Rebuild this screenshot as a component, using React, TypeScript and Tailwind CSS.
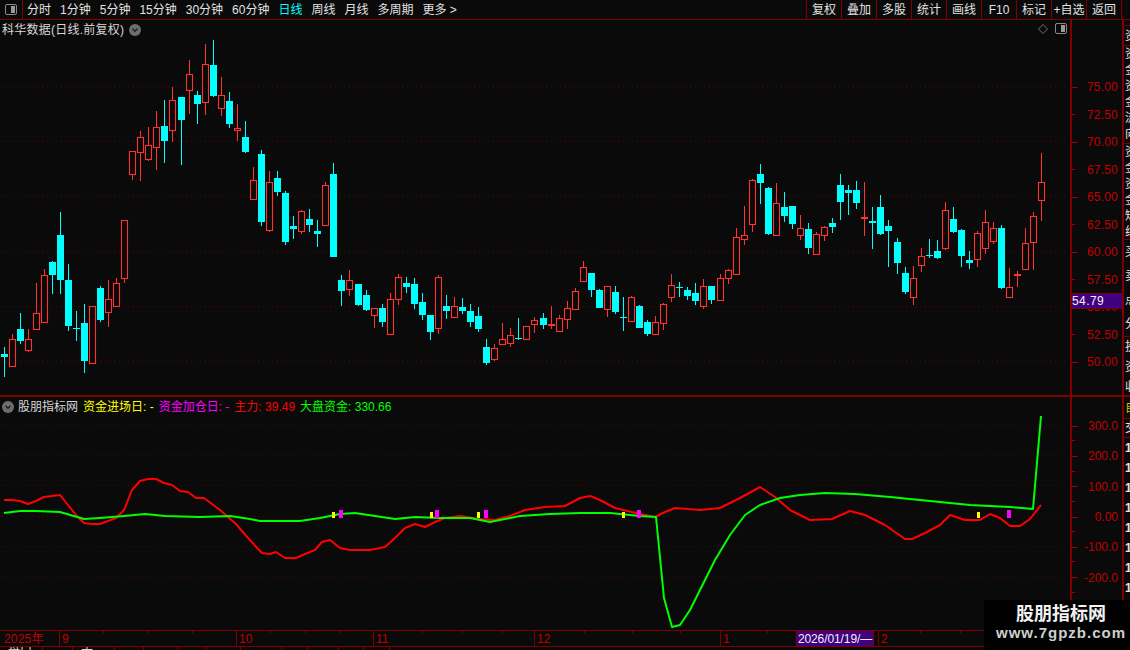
const candles: [number, number, number, number, number, number][] = [
[0,4,347,354,357,377],[1,12,334,339,366,366],[0,20,313,329,341,344],[1,28,329,339,350,352],[1,36,283,313,329,329],[1,44,269,275,322,323],[0,52,261,262,275,294],[0,60,212,235,280,294],[0,68,264,280,326,331],[0,76,311,328,329,341],[0,84,304,323,361,373],[1,92,306,306,363,364],[0,100,286,288,320,322],[1,108,280,299,312,327],[1,116,278,283,306,306],[1,124,220,220,278,283],
[1,132,151,151,174,180],[1,140,131,137,152,181],[1,148,127,145,159,161],[1,156,111,127,147,170],[0,164,100,126,141,163],[1,172,87,100,130,142],[0,181,97,97,120,165],[1,189,60,74,90,114],[0,197,91,95,104,124],[1,205,44,64,102,115],[0,213,40,65,96,97],[1,221,77,95,108,116],[0,229,92,101,124,128],[1,237,104,128,130,141],[0,245,121,137,152,153],[1,253,167,180,199,199],[0,261,150,154,222,226],[1,269,171,182,230,232],[0,277,171,178,192,196],[0,285,191,193,242,245],[0,293,216,226,229,239],[1,301,210,211,231,234],[0,309,209,219,225,232],[0,317,220,231,234,247],[1,325,182,185,225,225],[0,333,163,174,257,257],
[0,341,275,280,291,306],[1,349,270,280,289,296],[0,358,284,284,305,306],[0,366,290,295,310,311],[1,374,308,308,315,328],[0,382,304,308,322,327],[1,390,293,299,334,334],[1,398,274,277,299,305],[0,406,277,283,287,293],[0,414,278,284,304,309],[0,422,293,302,315,320],[0,430,315,315,332,340],[1,438,275,277,328,334],[0,446,295,306,311,319],[1,454,297,306,317,317],[0,462,298,307,311,314],[0,470,304,311,322,327],[0,478,307,316,329,332],[0,486,339,347,363,365],[1,494,344,348,359,361],[1,502,323,339,344,344],[1,510,328,335,343,347],[0,518,318,338,339,340],[1,526,326,326,339,339],[1,534,317,320,324,333],[0,543,313,318,325,329],[1,551,306,324,325,329],[1,559,315,318,331,332],[1,567,301,308,319,329],
[1,575,288,291,309,309],[1,583,261,267,281,281],[0,591,273,273,290,297],[0,599,289,290,308,308],[1,607,286,286,309,317],[0,615,286,292,312,314],[0,623,297,317,318,331],[1,631,296,297,321,322],[0,639,305,306,328,328],[0,647,320,322,334,336],[1,655,316,322,334,334],[1,663,303,304,323,330],[1,671,274,285,297,302],[0,679,282,287,288,297],[0,687,287,290,296,300],[0,695,283,293,301,305],[1,703,279,286,306,309],[0,711,286,286,300,304],[1,720,274,278,300,300],[1,728,269,270,278,284],[1,736,228,237,274,275],[1,744,206,235,239,245],[1,752,179,180,224,232],[0,760,164,174,183,204],[0,768,187,188,234,235],[1,776,183,203,235,235],[0,784,192,207,216,222],[0,792,206,206,224,229],[1,800,215,228,235,240],[0,808,223,229,248,254],
[1,816,232,234,254,255],[1,824,226,227,235,241],[0,832,218,223,227,233],[0,840,174,185,202,220],[0,848,185,190,193,215],[0,856,181,190,203,209],[1,864,182,217,218,236],[0,872,207,221,223,249],[0,880,195,207,234,235],[0,888,220,226,231,267],[0,897,238,242,263,274],[0,905,267,273,292,294],[1,913,266,278,297,305],[1,921,248,256,265,272],[0,929,239,255,256,258],[0,937,240,251,258,259],[1,945,202,210,248,250],[0,953,207,219,232,233],[0,961,229,230,256,267],[0,969,251,260,263,269],[1,977,231,233,259,267],[1,985,210,222,248,254],[1,993,222,228,241,244],[0,1001,225,228,288,289],[1,1009,268,287,297,297],[1,1017,271,274,275,287],[1,1025,228,243,269,269],[1,1033,212,216,242,270],[1,1041,153,182,200,221],
];

const red = "4,500 12,500 20,501 28,504 36,501 44,497 52,496 60,495 68,505 76,515 84,523 92,524 100,524 108,521 116,518 124,510 132,490 140,481 148,479 156,479 164,483 172,485 180,491 188,492 196,498 204,498 212,504 220,510 228,517 236,524 248,538 262,553 270,554 276,552 285,558 296,558 305,554 315,550 322,542 330,540 340,548 350,550 370,550 385,547 395,538 405,528 415,524 425,527 435,522 445,518 460,516 478,519 495,520 510,516 525,510 545,507 565,506 580,498 590,496 600,500 615,508 640,514 655,517 665,512 675,508 700,510 720,508 740,498 760,487 775,497 790,510 810,520 832,519 850,511 865,515 885,525 905,539 912,539 925,533 940,525 950,515 965,520 980,520 990,514 1000,518 1010,526 1020,526 1030,519 1041,505";
const green = "4,513 20,511 36,511 60,512 84,519 100,518 124,516 145,514 165,516 200,517 230,516 250,519 260,521 300,521 320,518 340,514 355,513 375,516 395,519 415,517 440,518 470,518 490,522 520,516 550,514 580,513 610,513 640,516 656,517 664,598 672,627 680,625 690,610 700,590 715,560 730,535 745,515 760,505 780,498 800,495 825,493 855,494 890,497 930,501 970,505 1010,507 1033,509 1041,416";

const font = "font-['Liberation_Sans','Noto_Sans_CJK_SC',sans-serif]";
const periods = ["分时", "1分钟", "5分钟", "15分钟", "30分钟", "60分钟", "日线", "周线", "月线", "多周期", "更多 >"];
const tools = ["复权", "叠加", "多股", "统计", "画线", "F10", "标记", "+自选", "返回"];
const prices = [["75.00", 1], ["72.50", 0], ["70.00", 1], ["67.50", 0], ["65.00", 1], ["62.50", 0], ["60.00", 1], ["57.50", 0], ["55.00", 1], ["52.50", 0], ["50.00", 1]] as const;
const indicator = ["300.0", "200.0", "100.0", "0.00", "-100.0", "-200.0"];
const sideA = ["资", "金", "资", "金", "流", "向"];
const sideB = ["资", "金", "资", "金", "短", "线"];
const sideC = ["买", "卖", "点", "分"];
const sideD = ["投", "资", "收"];
const months: [string, number, number][] = [
  ["9", 177, 0],
  ["10", 137, 0],
  ["11", 161, 0],
  ["12", 186, 0],
  ["1", 76, 0],
];
const timeTicks = [103, 148, 192, 270, 305, 340, 422, 462, 502, 584, 632, 680, 767, 920, 960];
const strip: [number, string][] = [[43, "盘口"], [30, ""], [42, "大"], [29, ""], [34, ""], [29, ""], [34, ""], [41, ""], [26, ""], [31, ""], [25, ""], [26, ""]];

function Chevron() {
  return (
    <svg width="12" height="12" viewBox="0 0 12 12" className="shrink-0">
      <circle cx="6" cy="6" r="6" fill="#6e6e6e" />
      <path d="M3.5 4.8 6 7.3 8.5 4.8" fill="none" stroke="#1c1c1c" strokeWidth="1.3" />
    </svg>
  );
}

function PanelIcon() {
  return (
    <svg width="12" height="12" viewBox="0 0 12 12">
      <rect x="0.5" y="0.5" width="11" height="10" rx="1.5" fill="none" stroke="#8a8a8a" />
      <rect x="6" y="2" width="4" height="7" fill="#9a9a9a" />
    </svg>
  );
}

function SideCell({ chars, h, leading }: { chars: string[]; h: string; leading: string }) {
  return (
    <div className={`flex shrink-0 flex-col overflow-hidden border-b border-[#800000] pl-[1px] ${h} ${leading}`}>
      {chars.map((c, i) => <span key={i}>{c}</span>)}
    </div>
  );
}

export default function App() {
  return (
    <div className={`relative flex h-[650px] w-[1130px] flex-col overflow-hidden bg-[#0a0a0a] text-[12px] ${font}`}>
      {/* top bar */}
      <div className="flex h-[20px] shrink-0 items-stretch border-b border-[#800000] pr-[8px] text-[#e2e2e2]">
        <div className="flex w-[23px] items-center justify-center border-r border-[#800000]"><PanelIcon /></div>
        <div className="flex flex-1 items-center gap-[7px] pl-[3px]">
          {periods.map((p) => (
            <span key={p} className={p === "日线" ? "px-[1px] text-[#00ffff]" : "px-[1px]"}>{p}</span>
          ))}
        </div>
        <div className="flex items-stretch border-l border-[#800000]">
          {tools.map((t) => (
            <div key={t} className="flex w-[35px] items-center justify-center border-r border-[#800000] whitespace-nowrap">{t}</div>
          ))}
        </div>
      </div>

      <div className="flex min-h-0 flex-1">
        {/* main column */}
        <div className="flex w-[1122px] shrink-0 flex-col">
          {/* price panel */}
          <div className="flex h-[377px] shrink-0 border-b-2 border-[#800000]">
            <div className="relative w-[1070px] shrink-0">
              <svg width="1070" height="375" viewBox="0 20 1070 375" className="block">
                {[87, 142, 197, 252, 307, 362].map((y) => (
                  <line key={y} x1="2" x2="1066" y1={y - 0.5} y2={y - 0.5} stroke="#6a0000" strokeDasharray="1 3.5" />
                ))}
                {candles.map(([up, x, wt, bt, bb, wb], i) => {
                  const c = up ? "#ff3232" : "#00ffff";
                  const h = Math.max(bb - bt, 1);
                  return (
                    <g key={i}>
                      <line x1={x + 0.5} x2={x + 0.5} y1={wt} y2={wb} stroke={c} />
                      {up ? (
                        <rect x={x - 2.5} y={bt + 0.5} width={6} height={h} fill="#0a0a0a" stroke={c} strokeWidth="1.1" />
                      ) : (
                        <rect x={x - 3} y={bt} width={7} height={h} fill={c} />
                      )}
                    </g>
                  );
                })}
              </svg>
              <div className="absolute left-[2px] top-[1px] flex items-center gap-[5px] text-[#d6d6d6]">
                <span className="tracking-[0.25px]">科华数据(日线.前复权)</span>
                <Chevron />
              </div>
              <div className="absolute right-[3px] top-[3px] flex items-center gap-[7px]">
                <svg width="10" height="10" viewBox="0 0 10 10"><path d="M5 .5 9.500 5 5 9.500.5 5Z" fill="none" stroke="#6f6f6f" /></svg>
                <PanelIcon />
              </div>
            </div>
            <div className="relative w-[52px] border-l-2 border-[#800000] pt-[53.5px] text-[#c00000]">
              {prices.map(([p, major]) => (
                <div key={p} className="flex h-[27.5px] items-center">
                  <span className={major ? "h-px w-[6px] bg-[#a00000]" : "h-px w-[3px] bg-[#a00000]"} />
                  <span className="ml-auto pr-[4px] tracking-[0.2px]">{p}</span>
                </div>
              ))}
              <div className="absolute left-0 right-0 top-[273px] flex h-[16px] items-center border-y border-[#800000] bg-[#400080] tracking-[0.4px] text-[#f0f0f0]">54.79</div>
            </div>
          </div>

          {/* indicator panel */}
          <div className="flex h-[234px] shrink-0 border-b border-[#800000]">
            <div className="relative w-[1070px] shrink-0">
              <svg width="1070" height="233" viewBox="0 397 1070 233" className="block">
                {[425, 455, 485, 516, 546, 576].map((y) => (
                  <line key={y} x1="2" x2="1066" y1={y + 0.5} y2={y + 0.5} stroke="#5a0000" strokeDasharray="1 3.5" />
                ))}
                <polyline points={red} fill="none" stroke="#ff0000" strokeWidth="2" strokeLinejoin="round" />
                <polyline points={green} fill="none" stroke="#00ff00" strokeWidth="2" strokeLinejoin="round" />
                {[333, 431, 478, 623, 978].map((x) => <rect key={x} x={x - 1} y={512} width="3" height="6" fill="#ffff00" />)}
                {[341, 437, 486, 639, 1009].map((x) => <rect key={x} x={x - 2} y={510} width="4" height="8" fill="#ff00ff" />)}
              </svg>
              <div className="absolute left-[2px] top-[1px] flex items-center gap-[4px] whitespace-nowrap">
                <Chevron />
                <span className="text-[#d6d6d6]">股朋指标网</span>
                <span className="ml-[1px] text-[#ffff00]">资金进场日: -</span>
                <span className="ml-[1px] text-[#ff00ff]">资金加仓日: -</span>
                <span className="ml-[1px] text-[#ff0000]">主力: 39.49</span>
                <span className="ml-[1px] text-[#00ff00]">大盘资金: 330.66</span>
              </div>
            </div>
            <div className="w-[52px] border-l-2 border-[#800000] pt-[14px] text-[#c00000]">
              {indicator.map((v) => (
                <div key={v} className="relative flex h-[30.3px] items-center">
                  <span className="h-px w-[6px] bg-[#a00000]" />
                  <span className="ml-auto pr-[4px]">{v}</span>
                  <span className="absolute bottom-0 left-0 h-px w-[3px] bg-[#a00000]" />
                </div>
              ))}
            </div>
          </div>

          {/* time axis */}
          <div className="relative flex h-[16px] shrink-0 items-center border-b border-[#800000] text-[#c00000]">
            <span className="w-[59px] pl-[4px] tracking-[0.2px]">2025年</span>
            {months.map(([m, w]) => (
              <span key={m} className="flex h-full items-center border-l border-[#800000] pl-[2px]" style={{ width: w }}>{m}</span>
            ))}
            <span className="flex h-full w-[78px] items-center justify-center border-x border-[#800000] bg-[#400080] whitespace-nowrap tracking-[-0.1px] text-[#f0f0f0]">2026/01/19/—</span>
            <span className="ml-[4px] flex h-full items-center border-l border-[#800000] pl-[2px]">2</span>
            {timeTicks.map((x) => (
              <span key={x} className="absolute top-0 h-[2px] w-px bg-[#800000]" style={{ left: x }} />
            ))}
          </div>
          {/* clipped status strip */}
          <div className="flex min-h-0 flex-1 overflow-hidden text-[#d6d6d6]">
            {strip.map(([w, t], i) => (
              <span key={i} className="overflow-hidden whitespace-nowrap border-r border-[#800000] pl-[8px] leading-[11px]" style={{ width: w }}>{t}</span>
            ))}
          </div>
        </div>

        {/* clipped right column */}
        <div className="flex w-[8px] flex-col overflow-hidden border-l-2 border-[#800000] text-[#e2e2e2]">
          <div className="h-[6px] shrink-0 border-b border-[#800000]" />
          <div className="flex h-[20px] shrink-0 items-center overflow-hidden border-b border-[#800000] pl-[1px]">资</div>
          <SideCell chars={sideA} h="h-[98px]" leading="leading-[16px]" />
          <SideCell chars={sideB} h="h-[96px]" leading="leading-[16px]" />
          <SideCell chars={sideC} h="h-[97px]" leading="leading-[24px]" />
          <div className="flex h-[60px] shrink-0 flex-col overflow-hidden border-b-2 border-[#800000] pl-[1px] leading-[20px]">
            {sideD.map((c, i) => <span key={i}>{c}</span>)}
          </div>
          <div className="flex h-[22px] shrink-0 items-center border-b border-[#800000] pl-[1px] text-[#c8c800]">自</div>
          <div className="flex h-[19px] shrink-0 items-center border-b border-[#800000] pl-[1px]">交</div>
          {[0, 1, 2, 3, 4, 5, 6, 7].map((i) => (
            <div key={i} className="h-[20px] shrink-0 pl-[1px] font-bold leading-[20px]">1</div>
          ))}
        </div>
      </div>

      {/* watermark */}
      <div className="absolute bottom-0 right-0 flex h-[50px] w-[146px] flex-col items-center bg-black pl-[8px] pt-[4px] text-[#f2f2f2]">
        <span className="text-[18px] font-bold leading-[20px]">股朋指标网</span>
        <span className="whitespace-nowrap text-[15px] font-semibold leading-[18px] tracking-[1px] text-[#cfcfcf]">www.7gpzb.com</span>
      </div>
    </div>
  );
}
